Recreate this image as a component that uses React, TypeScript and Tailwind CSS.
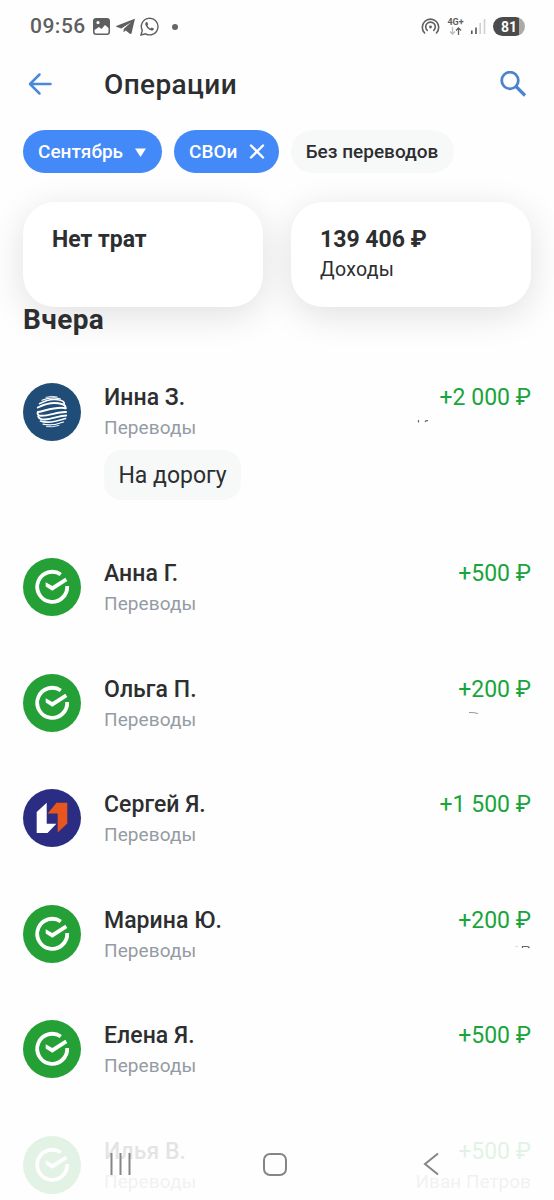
import React from 'react';

type Bank = 'gazprom' | 'sber' | 'psb';

interface Operation {
  name: string;
  amount: string;
  bank: Bank;
  comment?: string;
  account?: string;
  faded?: boolean;
  trace?: React.ReactNode;
}

const operations: Operation[] = [
  {
    name: 'Инна З.',
    amount: '+2 000 ₽',
    bank: 'gazprom',
    comment: 'На дорогу',
    trace: (
      <svg width="115" height="6" viewBox="0 0 115 6" fill="none" stroke="#666" strokeWidth="1.2">
        <path d="M2.500 0v2.500M9 2l1-1.300h2" />
      </svg>
    ),
  },
  { name: 'Анна Г.', amount: '+500 ₽', bank: 'sber' },
  {
    name: 'Ольга П.',
    amount: '+200 ₽',
    bank: 'sber',
    trace: (
      <svg width="64" height="6" viewBox="0 0 64 6" fill="none" stroke="#999" strokeWidth="1">
        <path d="M2 .5l5 .2 4 .8" />
      </svg>
    ),
  },
  { name: 'Сергей Я.', amount: '+1 500 ₽', bank: 'psb' },
  {
    name: 'Марина Ю.',
    amount: '+200 ₽',
    bank: 'sber',
    trace: (
      <svg width="17" height="6" viewBox="0 0 17 6" fill="none" strokeWidth="1.2">
        <path d="M1 4l3-1" stroke="#ddd" />
        <path d="M8.500 5V3.500H14L15.500 5" stroke="#666" />
      </svg>
    ),
  },
  { name: 'Елена Я.', amount: '+500 ₽', bank: 'sber' },
  { name: 'Илья В.', amount: '+500 ₽', bank: 'sber', account: 'Иван Петров', faded: true },
];

const BankLogo: React.FC<{ bank: Bank }> = ({ bank }) => {
  if (bank === 'gazprom') {
    return (
      <svg className="w-[58px] h-[58px] shrink-0" viewBox="0 0 58 58" fill="none">
        <circle cx="29" cy="29" r="29" fill="#204d78" />
        <g stroke="#fff" strokeLinecap="round">
          <path d="M23 14.300q5.500-1.800 11-.4" strokeWidth="0.9" />
          <path d="M19 17.300q10-4 18.500-1.300" strokeWidth="1.200" />
          <path d="M16.500 20.700c8-4.500 16-5 21.500-3.300 2.500.8 3.500 2.300 3.300 3.600" strokeWidth="1.500" />
          <path d="M14.800 24.500c9-4.500 17-5.500 24-3.500 3 1 4 2.500 3.800 4.200" strokeWidth="1.900" />
          <path d="M15.500 29c9-2 18-5.500 27-3.800" strokeWidth="2" />
          <path d="M15 28.800c-1.200 2 0 3.800 3 4 8 .4 17-4.300 25-3.800" strokeWidth="2" />
          <path d="M15.200 33.300c1 2.500 3.500 3.300 6.500 3.200 8-.3 14-3.800 21.500-4" strokeWidth="1.900" />
          <path d="M17.500 38c7.500 3 17.500 0 25-2.500" strokeWidth="1.600" />
          <path d="M20 41.200c6.500 1.500 14 .3 20.500-2.200" strokeWidth="1.200" />
          <path d="M23.500 43.600q6 1 12.500-1.200" strokeWidth="0.9" />
        </g>
      </svg>
    );
  }
  if (bank === 'psb') {
    return (
      <svg className="w-[58px] h-[58px] shrink-0" viewBox="0 0 58 58">
        <circle cx="29" cy="29" r="29" fill="#2b2d83" />
        <path d="M13.700 23L23.700 13.800v21h9.700L24.500 44H13.700z" fill="#fff" />
        <path d="M33.500 13.800h10.800v20.700L34.700 43.500V24.500H24.700z" fill="#e8561f" />
      </svg>
    );
  }
  return (
    <svg className="w-[58px] h-[58px] shrink-0" viewBox="0 0 58 58" fill="none">
      <circle cx="29" cy="29" r="29" fill="#24a036" />
      <path d="M37.800 16.500A15 15 0 1 0 44.200 28" stroke="#fff" strokeWidth="3.800" />
      <path d="M22.700 24.200v4.200l6.600 4.300 15-9.700-2-3.200-13 8.100z" fill="#fff" />
    </svg>
  );
};

const StatusBar = () => (
  <div className="h-[53px] pl-[30px] pr-[29px] flex items-center text-[#5f5f5f]">
    <span className="text-[21px] font-medium tracking-[0.5px] w-[63px] whitespace-nowrap leading-none">09:56</span>
    <svg className="w-[17px] h-[17px]" viewBox="0 0 17 17">
      <path fillRule="evenodd" fill="currentColor" d="M3 0h11a3 3 0 0 1 3 3v11a3 3 0 0 1-3 3H3a3 3 0 0 1-3-3V3a3 3 0 0 1 3-3zM1.500 13.500c0 1.400.6 2 2 2h10c1.400 0 2-.6 2-2V10l-3.500-3-3.500 4L6 9l-4.500 3zM5 3a1.600 1.600 0 1 0 0 3.200A1.600 1.600 0 0 0 5 3z" />
    </svg>
    <svg className="w-[19px] h-[17px] ml-[6px]" viewBox="0 0 19 17">
      <path fill="currentColor" d="M18.700.8L.8 7.800c-1 .4-.8 1 .1 1.300l4.400 1.300L15 4.300 7.700 11l-.2 3.300 2.200-1.700 4.200 3.200c.8.500 1.500.2 1.700-.8L18.800 1.500c.1-.6 0-.9-.1-.7z" />
    </svg>
    <svg className="w-[19px] h-[19px] ml-[5px]" viewBox="0 0 19 19" fill="none">
      <path d="M1 18l1.300-4.600A8.300 8.300 0 1 1 5.600 16.800z" stroke="currentColor" strokeWidth="1.400" />
      <path d="M6.300 5.100c-1.200.7-1.300 2.100-.6 3.400 1.300 2.500 3 4.200 5.600 5 1.400.4 2.500-.4 2.600-1.700 0-.5-1.700-1.300-2.200-1.400-.5 0-.8 1-1.300 1-1.100-.3-2.600-1.800-2.900-2.900 0-.4.700-.7.600-1.200-.1-.6-.7-2-1-2.200z" fill="currentColor" />
    </svg>
    <span className="w-[6px] h-[6px] ml-[13px] rounded-full bg-[#666]" />

    <svg className="w-[19px] h-[19px] ml-auto" viewBox="0 0 19 19" fill="none" stroke="currentColor" strokeWidth="1.600" strokeLinecap="round">
      <circle cx="9.500" cy="10" r="1.400" fill="currentColor" stroke="none" />
      <path d="M3.600 16a8.200 8.200 0 1 1 11.800 0M6.200 13.400a4.800 4.800 0 1 1 6.600 0" />
    </svg>
    <div className="ml-[7px] w-[17px] flex flex-col items-center">
      <span className="text-[9px] leading-[9px] font-bold">4G+</span>
      <svg className="w-[13px] h-[8px]" viewBox="0 0 13 8" fill="none" strokeWidth="1.300">
        <path d="M3.500 0v7M1 4.500l2.500 2.500L6 4.500" stroke="#bbb" />
        <path d="M9.500 8V1M7 3.500L9.500 1 12 3.500" stroke="#5f5f5f" />
      </svg>
    </div>
    <svg className="w-[15px] h-[15px] ml-[7px]" viewBox="0 0 15 15">
      <path d="M0 11.500h1.600V15H0zM4.200 8.500h1.600V15H4.200z" fill="#555" />
      <path d="M8.400 4H10v11H8.400zM12.700 0h1.600v15h-1.600z" fill="#d0d0d0" />
    </svg>
    <div className="ml-[7px] w-[32px] h-[19px] rounded-full overflow-hidden flex items-center justify-center bg-linear-to-r from-[#4b4b4b] from-80% to-[#aaa] to-80%">
      <span className="text-white text-[14px] leading-none font-bold">81</span>
    </div>
  </div>
);

const OperationRow: React.FC<{ operation: Operation }> = ({ operation }) => {
  const { name, amount, bank, comment, account, faded, trace } = operation;
  return (
    <div className={`flex items-start shrink-0 ${comment ? 'h-[175.3px]' : 'h-[115.5px]'} ${faded ? 'opacity-[0.12]' : ''}`}>
      <BankLogo bank={bank} />
      <div className={`ml-[23px] flex-1 flex flex-col items-start ${comment ? 'pt-[1px]' : 'pt-[2px]'}`}>
        <div className="text-[23px] leading-[28px] font-medium tracking-[0.05px] text-[#2d2e30]">{name}</div>
        <div className="mt-[2px] text-[19px] leading-[28px] tracking-[0.1px] text-[#959ba4]">Переводы</div>
        {comment && (
          <div className="mt-[8px] h-[50px] w-[137px] pt-[2px] flex items-center justify-center rounded-[18px] bg-[#f7f9f9] text-[23px] text-[#2d2e30]">
            {comment}
          </div>
        )}
      </div>
      <div className={`flex flex-col items-end ${comment ? 'pt-[1px]' : 'pt-[2px]'}`}>
        <div className="text-[23px] leading-[28px] text-[#19a53b]">{amount}</div>
        {trace && <div className="mt-[8px]">{trace}</div>}
        {account && <div className="mt-[2px] text-[19px] leading-[28px] text-[#959ba4]">{account}</div>}
      </div>
    </div>
  );
};

const App = () => (
  <div className="relative w-[554px] h-[1200px] overflow-hidden bg-[#fefefe] font-['Roboto',sans-serif] text-[#2d2e30]">
    <StatusBar />

    {/* Header */}
    <div className="h-[62px] pl-[28px] pr-[27px] flex items-center">
      <svg className="w-[24px] h-[24px]" viewBox="0 0 24 24" fill="none" stroke="#4a88dc" strokeWidth="2.500" strokeLinecap="round" strokeLinejoin="round">
        <path d="M22.500 12H2M11.500 2.500L2 12l9.500 9.500" />
      </svg>
      <h1 className="ml-[52px] pt-[2px] text-[28px] font-medium leading-none tracking-[0.4px]">Операции</h1>
      <svg className="w-[27px] h-[27px] ml-auto" viewBox="0 0 27 27" fill="none" stroke="#4a84cf">
        <circle cx="10" cy="9.500" r="8.300" strokeWidth="2.800" />
        <path d="M16 15.500L25 24.500" strokeWidth="3.200" />
      </svg>
    </div>

    {/* Filters */}
    <div className="mt-[15px] px-[23px] flex gap-3 text-[19px] font-medium">
      <div className="w-[139px] h-[43px] pl-[15px] pr-[16px] pt-px rounded-full bg-[#438af8] text-white flex items-center justify-between">
        Сентябрь
        <svg className="w-[11px] h-[9px]" viewBox="0 0 11 9" fill="#fff">
          <path d="M0 .5h11L5.500 9z" />
        </svg>
      </div>
      <div className="w-[105px] h-[43px] pl-[15px] pr-[14px] pt-px rounded-full bg-[#438af8] text-white flex items-center justify-between">
        СВОи
        <svg className="w-[16px] h-[16px]" viewBox="0 0 16 16" stroke="#fff" strokeWidth="2.400" strokeLinecap="round">
          <path d="M2 1.500l12 12M14 1.500L2 13.500" />
        </svg>
      </div>
      <div className="w-[163px] h-[43px] pt-px pr-px rounded-full bg-[#f7f9f9] flex items-center justify-center">Без переводов</div>
    </div>

    {/* Totals */}
    <div className="mt-[29px] px-[23px] flex gap-[28px]">
      <div className="w-[240px] h-[105px] rounded-[32px] bg-white pl-[29px] pt-[24px] shadow-[0_8px_36px_rgba(0,0,0,0.12)]">
        <div className="text-[23px] leading-[28px] font-bold">Нет трат</div>
      </div>
      <div className="w-[240px] h-[105px] rounded-[32px] bg-white pl-[29px] pt-[24px] shadow-[0_8px_36px_rgba(0,0,0,0.12)]">
        <div className="text-[23px] leading-[28px] font-bold">139 406 ₽</div>
        <div className="mt-[2px] text-[19.500px] leading-[28px] tracking-[0.300px]">Доходы</div>
      </div>
    </div>

    <h2 className="h-[76px] px-[23px] text-[28px] leading-[26px] font-bold tracking-[0.4px]">Вчера</h2>

    <div className="px-[23px] flex flex-col">
      {operations.map((operation) => (
        <OperationRow key={operation.name} operation={operation} />
      ))}
    </div>

    {/* System navigation */}
    <div className="absolute inset-x-0 bottom-0 h-[72px] pl-[110px] pr-[115px] flex items-center justify-between">
      <svg className="w-[21px] h-[22px]" viewBox="0 0 21 22" stroke="#858585" strokeWidth="2">
        <path d="M1.500 0v22M10.500 0v22M19.500 0v22" />
      </svg>
      <div className="w-[24px] h-[23px] mr-[4px] rounded-[7px] border-2 border-[#858585]" />
      <svg className="w-[16px] h-[24px]" viewBox="0 0 16 24" fill="none" stroke="#858585" strokeWidth="2">
        <path d="M15 1.500L2 12l13 10.500" />
      </svg>
    </div>
  </div>
);

export default App;
